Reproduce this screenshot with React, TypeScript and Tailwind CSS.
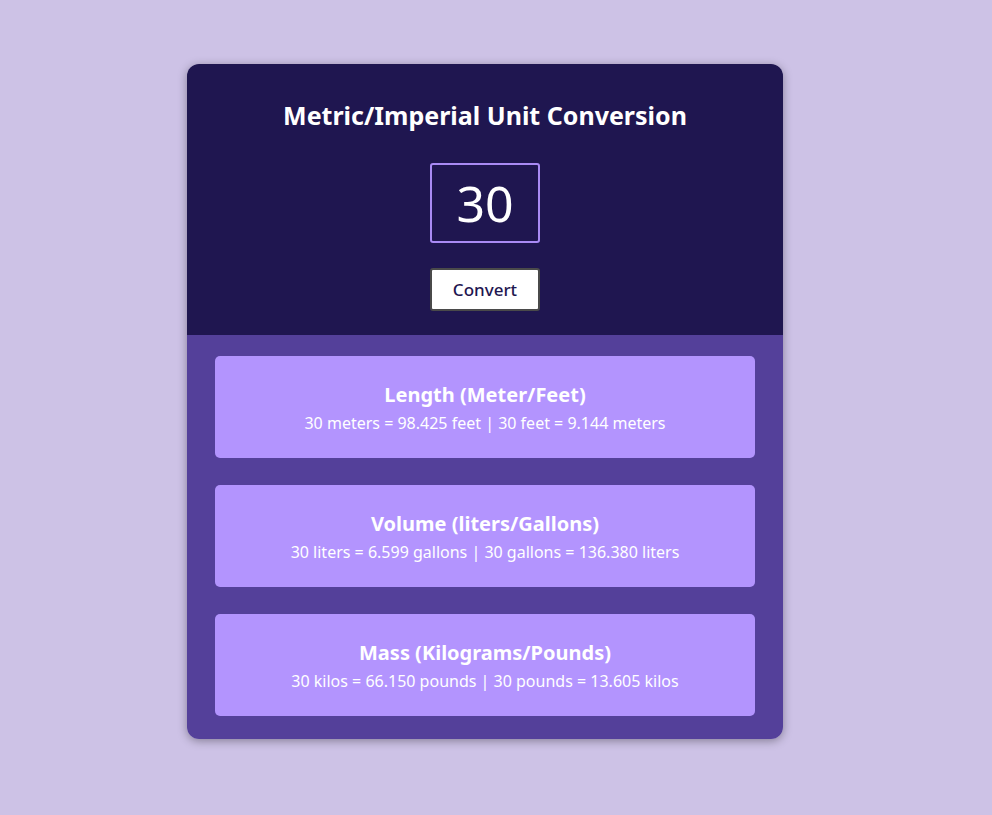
export default function App() {
  const rows = [
    { t: "Length (Meter/Feet)", d: "30 meters = 98.425 feet | 30 feet = 9.144 meters" },
    { t: "Volume (liters/Gallons)", d: "30 liters = 6.599 gallons | 30 gallons = 136.380 liters" },
    { t: "Mass (Kilograms/Pounds)", d: "30 kilos = 66.150 pounds | 30 pounds = 13.605 kilos" },
  ];
  return (
    <div className="min-h-[815px] bg-[#cdc2e6] pt-[64px] pr-[22px] flex justify-center" style={{ fontFamily: '"Noto Sans", sans-serif' }}>
      <div className="w-[596px] h-[675px] rounded-[12px] overflow-hidden shadow-[0_2px_10px_rgba(0,0,0,0.35)] flex flex-col">
        <div className="bg-[#1f1650] h-[271px] flex flex-col items-center pt-[33px]">
          <h1 className="text-white font-bold text-[25px] leading-[36px]">Metric/Imperial Unit Conversion</h1>
          <div className="mt-[30px] w-[110px] h-[80px] border-2 border-[#a98af5] rounded-[3px] flex items-center justify-center text-white text-[50px]">30</div>
          <button className="mt-[25px] w-[110px] h-[43px] bg-white border-2 border-[#4a4a4a] rounded-[3px] text-[#1f1650] text-[17px] font-medium">Convert</button>
        </div>
        <div className="bg-[#54409a] flex-1 px-[28px] pt-[21px] flex flex-col gap-[27px]">
          {rows.map((r) => (
            <div key={r.t} className="h-[102px] bg-[#b394fe] rounded-[5px] flex flex-col items-center justify-center text-white">
              <div className="font-bold text-[20px] leading-[28px]">{r.t}</div>
              <div className="text-[16px] leading-[22px] mt-[3px]">{r.d}</div>
            </div>
          ))}
        </div>
      </div>
    </div>
  );
}
